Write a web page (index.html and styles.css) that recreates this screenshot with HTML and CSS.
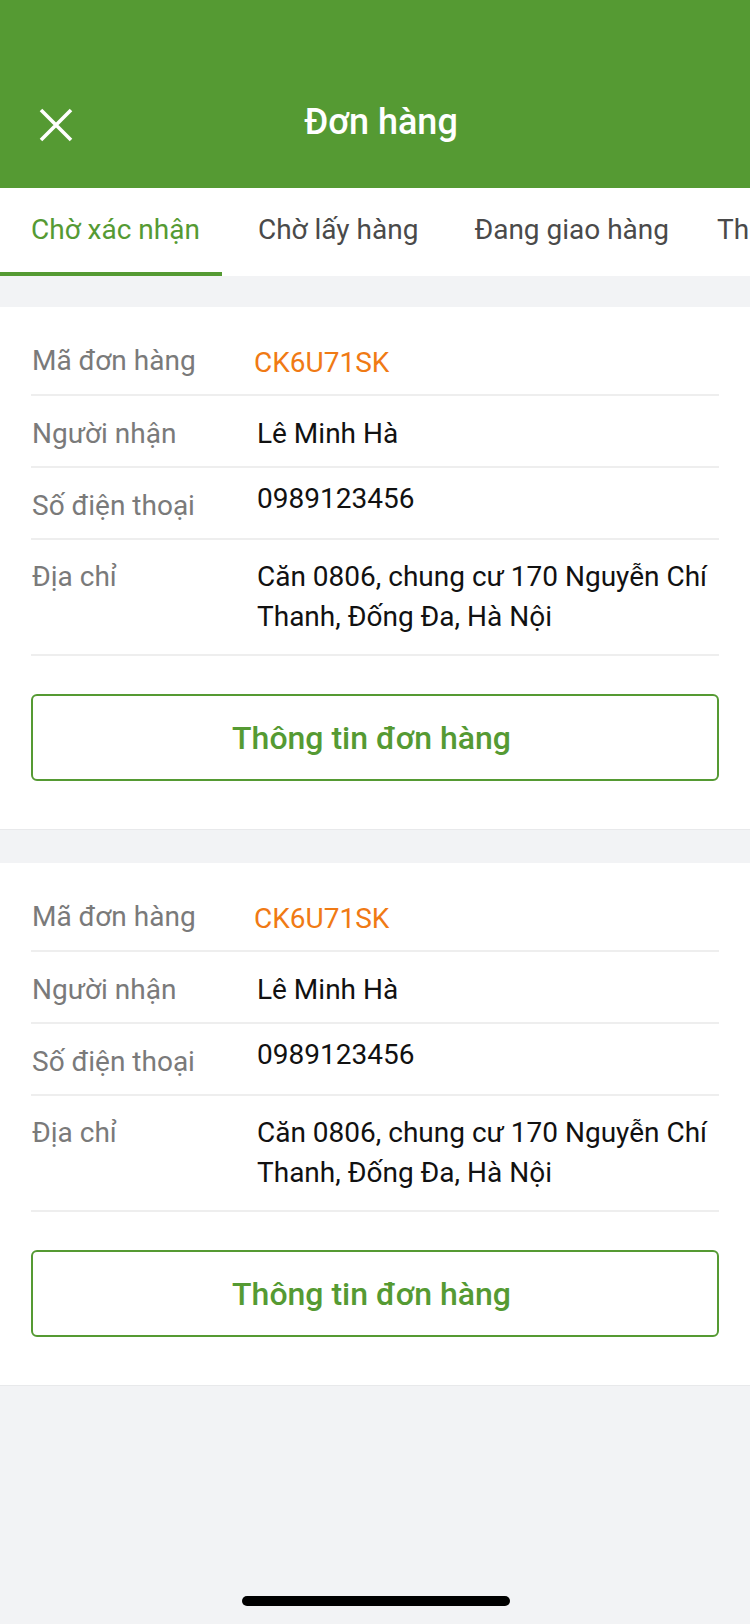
FILE: index.html
```html
<!DOCTYPE html>
<html lang="vi">
<head>
<meta charset="utf-8">
<title>Đơn hàng</title>
<link rel="stylesheet" href="styles.css">
</head>
<body>
<div class="screen">
  <header class="header">
    <button class="close" aria-label="Đóng">
      <svg width="34" height="34" viewBox="0 0 34 34"><path d="M2 2 L32 32 M32 2 L2 32" stroke="#fff" stroke-width="3.6" stroke-linecap="butt" fill="none"/></svg>
    </button>
    <h1 class="title">Đơn hàng</h1>
    <span class="spacer"></span>
  </header>
  <nav class="tabs">
    <div class="tab tab--active">Chờ xác nhận</div>
    <div class="tab tab--second">Chờ lấy hàng</div>
    <div class="tab tab--third">Đang giao hàng</div>
    <div class="tab tab--fourth">Thành công</div>
  </nav>
  <main class="list">
    <section class="card">
      <div class="row row--first"><div class="label">Mã đơn hàng</div><div class="value value--code">CK6U71SK</div></div>
      <div class="row"><div class="label">Người nhận</div><div class="value">Lê Minh Hà</div></div>
      <div class="row"><div class="label">Số điện thoại</div><div class="value value--phone">0989123456</div></div>
      <div class="row row--last"><div class="label">Địa chỉ</div><div class="value">Căn 0806, chung cư 170 Nguyễn Chí Thanh, Đống Đa, Hà Nội</div></div>
      <button class="btn">Thông tin đơn hàng</button>
    </section>
    <section class="card">
      <div class="row row--first"><div class="label">Mã đơn hàng</div><div class="value value--code">CK6U71SK</div></div>
      <div class="row"><div class="label">Người nhận</div><div class="value">Lê Minh Hà</div></div>
      <div class="row"><div class="label">Số điện thoại</div><div class="value value--phone">0989123456</div></div>
      <div class="row row--last"><div class="label">Địa chỉ</div><div class="value">Căn 0806, chung cư 170 Nguyễn Chí Thanh, Đống Đa, Hà Nội</div></div>
      <button class="btn">Thông tin đơn hàng</button>
    </section>
  </main>
  <div class="home-indicator"></div>
</div>
</body>
</html>
```

FILE: styles.css
```css
* { box-sizing: border-box; }
html, body { margin: 0; padding: 0; }
body {
  font-family: Roboto, "Noto Sans", "Liberation Sans", sans-serif;
  background: #f2f3f5;
  color: #111;
}
.screen {
  width: 750px;
  min-height: 1624px;
  background: #f2f3f5;
  overflow: hidden;
}
.header {
  height: 188px;
  background: #559a33;
  display: grid;
  grid-template-columns: 1fr auto 1fr;
  align-items: end;
  padding: 0 0 48px 0;
}
.close {
  justify-self: start;
  margin-left: 39px;
  width: 34px;
  height: 34px;
  padding: 0;
  border: 0;
  background: none;
  display: flex;
  margin-bottom: -2px;
}
.title {
  margin: 0;
  padding-left: 12px;
  font-size: 36px;
  line-height: 36px;
  font-weight: 500;
  color: #fff;
}
.tabs {
  display: flex;
  background: #fff;
  height: 88px;
  white-space: nowrap;
  overflow: hidden;
}
.tab {
  flex: none;
  font-size: 28px;
  line-height: 84px;
  color: #4a4a4a;
  padding: 0 26px;
  border-bottom: 4px solid transparent;
}
.tab--active {
  color: #559a33;
  border-bottom-color: #559a33;
  padding-left: 31px;
  padding-right: 22px;
}
.tab--second { padding-left: 36px; padding-right: 28px; }
.tab--third { padding-left: 28px; padding-right: 22px; }
.tab--fourth { padding-left: 26px; }
.list {
  display: flex;
  flex-direction: column;
  gap: 33px;
  padding-top: 31px;
}
.card {
  background: #fff;
  padding: 15px 31px 48px;
  border-bottom: 1px solid #e8e9eb;
}
.row {
  display: flex;
  align-items: flex-start;
  padding: 18px 0 12px;
  border-bottom: 2px solid #eeeeee;
  font-size: 28px;
  line-height: 40px;
}
.row--first { padding-top: 19px; padding-bottom: 11px; }
.row--last { padding-top: 17px; padding-bottom: 17px; }
.label {
  width: 226px;
  flex: none;
  color: #7a7a7a;
  padding-left: 1px;
}
.value { flex: 1; color: #111; }
.value--code { color: #f07a14; margin-top: 2px; margin-left: -3px; }
.value--phone { margin-top: -7px; }
.btn {
  display: block;
  width: 100%;
  height: 87px;
  margin-top: 38px;
  border: 2px solid #559a33;
  border-radius: 6px;
  background: #fff;
  color: #559a33;
  font-family: Roboto, "Noto Sans", "Liberation Sans", sans-serif;
  font-size: 32px;
  font-weight: 500;
  padding: 0 7px 0 0;
}
.home-indicator {
  position: fixed;
  left: 242px;
  top: 1596px;
  width: 268px;
  height: 10px;
  border-radius: 5px;
  background: #000;
}
```
